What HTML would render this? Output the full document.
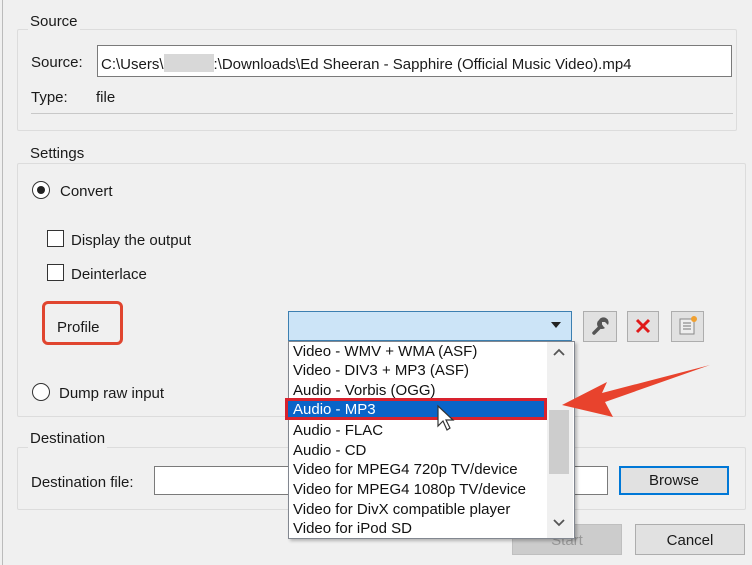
<!DOCTYPE html>
<html><head><meta charset="utf-8"><style>
*{box-sizing:border-box;margin:0;padding:0}
body{width:752px;height:565px;background:#f0f0f0;position:relative;overflow:hidden;font-family:"Liberation Sans",sans-serif;font-size:15px;color:#1a1a1a}
.a{position:absolute;white-space:nowrap}
.t{margin-top:2px}
.grp{position:absolute;border:1px solid #dcdcdc;border-radius:2px}
.lbl{position:absolute;background:#f0f0f0;padding:0 2px;line-height:18px}
.cb{position:absolute;width:17px;height:17px;border:1px solid #333;background:#fff}
.rad{position:absolute;width:18px;height:18px;border:1px solid #333;border-radius:50%;background:#fff}
.btn{position:absolute;border:1px solid #adadad;background:#e1e1e1;text-align:center}
.dd{position:absolute;z-index:10}
.it{position:absolute;left:293px;line-height:20px;font-size:15px;color:#111;z-index:11;white-space:nowrap}
</style></head><body>
<div class="a" style="left:2px;top:0;width:1px;height:565px;background:#bbb"></div>

<div class="grp" style="left:17px;top:29px;width:720px;height:102px"></div>
<div class="lbl" style="left:28px;top:13px">Source</div>
<div class="a t" style="left:31px;top:52px">Source:</div>
<div class="a" style="left:97px;top:45px;width:635px;height:32px;background:#fff;border:1px solid #7a7a7a"></div>
<div class="a t" style="left:101px;top:52px">C:\Users\<span style="display:inline-block;width:50px;height:18px;background:#d8d8d8;vertical-align:-3px"></span>:\Downloads\Ed Sheeran - Sapphire (Official Music Video).mp4</div>
<div class="a t" style="left:31px;top:87px">Type:</div>
<div class="a t" style="left:96px;top:87px">file</div>
<div class="a" style="left:31px;top:113px;width:702px;height:1px;background:#c8c8c8"></div>

<div class="grp" style="left:17px;top:163px;width:729px;height:254px"></div>
<div class="lbl" style="left:28px;top:145px">Settings</div>
<div class="rad" style="left:32px;top:181px"><div style="position:absolute;left:4px;top:4px;width:8px;height:8px;border-radius:50%;background:#222"></div></div>
<div class="a t" style="left:60px;top:181px">Convert</div>
<div class="cb" style="left:47px;top:230px"></div>
<div class="a t" style="left:71px;top:230px">Display the output</div>
<div class="cb" style="left:47px;top:264px"></div>
<div class="a t" style="left:71px;top:264px">Deinterlace</div>
<div class="a" style="left:42px;top:301px;width:81px;height:44px;border:3px solid #e0452f;border-radius:6px"></div>
<div class="a t" style="left:57px;top:317px">Profile</div>
<div class="rad" style="left:32px;top:383px"></div>
<div class="a t" style="left:59px;top:383px">Dump raw input</div>

<div class="a" style="left:288px;top:311px;width:284px;height:30px;background:#cce4f7;border:1px solid #3c7fb1"></div>
<div class="a" style="left:551px;top:322px;width:0;height:0;border-left:5px solid transparent;border-right:5px solid transparent;border-top:6px solid #222"></div>
<div class="btn" style="left:583px;top:311px;width:34px;height:31px">
<svg width="32" height="29" viewBox="0 0 32 29"><path d="M10 21 L17 14" stroke="#555" stroke-width="3.5" stroke-linecap="round"/><path d="M15 8 a5 5 0 0 0 6 8 l-3 -3 l0 -3 l3 0 l3 3 a5 5 0 0 0 -9 -5z" fill="#555"/></svg></div>
<div class="btn" style="left:627px;top:311px;width:32px;height:31px">
<svg width="30" height="29" viewBox="0 0 30 29"><path d="M9 8 L21 20 M21 8 L9 20" stroke="#e01a1a" stroke-width="3"/></svg></div>
<div class="btn" style="left:671px;top:311px;width:33px;height:31px">
<svg width="31" height="29" viewBox="0 0 31 29"><rect x="8" y="7" width="14" height="15" fill="#eee" stroke="#888"/><path d="M11 11h8M11 14h8M11 17h8" stroke="#777"/><circle cx="22" cy="7" r="3" fill="#f0a030"/></svg></div>

<div class="grp" style="left:17px;top:447px;width:729px;height:63px"></div>
<div class="lbl" style="left:28px;top:430px">Destination</div>
<div class="a t" style="left:31px;top:472px">Destination file:</div>
<div class="a" style="left:154px;top:466px;width:454px;height:29px;background:#fff;border:1px solid #7a7a7a"></div>
<div class="btn" style="left:619px;top:466px;width:110px;height:29px;border:2px solid #0078d7;line-height:25px">Browse</div>
<div class="btn" style="left:512px;top:524px;width:110px;height:31px;background:#ccc;border-color:#bfbfbf;color:#999;line-height:31px">Start</div>
<div class="btn" style="left:635px;top:524px;width:110px;height:31px;line-height:31px">Cancel</div>

<div class="dd" style="left:288px;top:341px;width:287px;height:198px;background:#fff;border:1px solid #828790;box-shadow:2px 2px 3px rgba(0,0,0,.25)"></div>
<div class="dd" style="left:547px;top:342px;width:26px;height:196px;background:#f0f0f0;z-index:11"></div>
<div class="dd" style="left:549px;top:410px;width:20px;height:64px;background:#cdcdcd;z-index:12"></div>
<svg class="dd" style="left:553px;top:348px;z-index:12" width="12" height="10"><path d="M1 7 L6 2 L11 7" stroke="#555" stroke-width="1.8" fill="none"/></svg>
<svg class="dd" style="left:553px;top:518px;z-index:12" width="12" height="10"><path d="M1 2 L6 7 L11 2" stroke="#555" stroke-width="1.8" fill="none"/></svg>
<div class="dd" style="left:285px;top:398px;width:262px;height:22px;background:#0a64c8;border:3px solid #d8222e;z-index:11"></div>
<div class="it" style="top:342px">Video - WMV + WMA (ASF)</div>
<div class="it" style="top:361px">Video - DIV3 + MP3 (ASF)</div>
<div class="it" style="top:381px">Audio - Vorbis (OGG)</div>
<div class="it" style="top:400px;color:#fff;z-index:12">Audio - MP3</div>
<div class="it" style="top:421px">Audio - FLAC</div>
<div class="it" style="top:441px">Audio - CD</div>
<div class="it" style="top:460px">Video for MPEG4 720p TV/device</div>
<div class="it" style="top:480px">Video for MPEG4 1080p TV/device</div>
<div class="it" style="top:500px">Video for DivX compatible player</div>
<div class="it" style="top:519px">Video for iPod SD</div>
<svg class="dd" style="left:436px;top:404px;z-index:13" width="22" height="30" viewBox="0 0 22 30"><path d="M2 2 L2 22 L7 17 L11 26 L14 24 L10 16 L17 16 Z" fill="#fff" stroke="#333" stroke-width="1.2"/></svg>

<svg class="dd" style="left:555px;top:360px;z-index:13" width="160" height="60" viewBox="0 0 160 60"><path d="M7 45 L52 22 L47 33 L155 5 L50 42 L58 57 Z" fill="#e8432d"/></svg>
</body></html>
